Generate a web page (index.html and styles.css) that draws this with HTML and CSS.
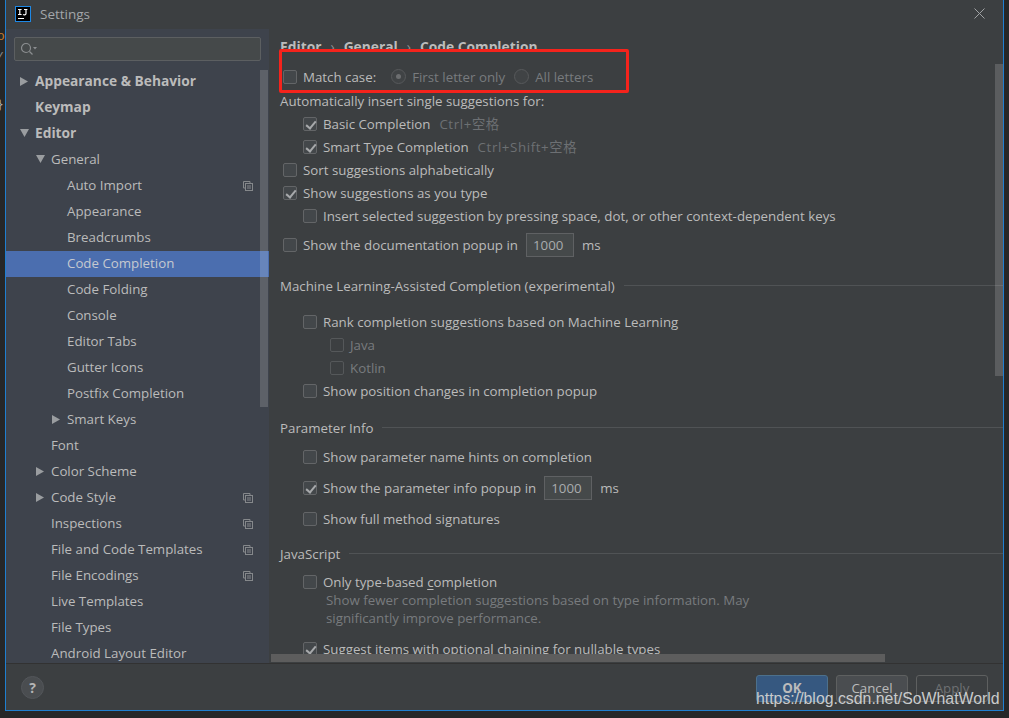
FILE: index.html
```html
<!DOCTYPE html>
<html lang="en">
<head>
<meta charset="utf-8">
<title>Settings</title>
<link rel="stylesheet" href="styles.css">
</head>
<body>
<span class="frag frag-o">o</span>
<span class="frag frag-s">/</span>
<span class="frag frag-b">}</span>
<div class="dialog">
  <header class="titlebar">
    <svg class="logo" width="16" height="16" viewBox="0 0 16 16"><rect x=".5" y=".5" width="15" height="15" fill="#000" stroke="#1e88e5"/><path d="M3 3.5h3.6M4.800 3.500v5M3 8.500h3.600M8 8.500c1 .6 3 .6 3-1V3.500M9 3.500h3.400M3 12.500h6" stroke="#fff" stroke-width="1.200" fill="none"/></svg>
    <span class="title">Settings</span>
    <svg class="close" width="11" height="11" viewBox="0 0 11 11"><path d="M.5.500l10 10M10.500.500l-10 10" stroke="#a0a2a4" stroke-width="1"/></svg>
  </header>
  <div class="middle">
    <aside class="sidebar">
      <div class="search">
        <svg width="18" height="14" viewBox="0 0 18 14"><circle cx="6" cy="6" r="4.500" fill="none" stroke="#8b8e90" stroke-width="1.200"/><path d="M9.500 9.500l3 3" stroke="#8b8e90" stroke-width="1.200"/><path d="M13 5h4l-2 2.500z" fill="#8b8e90"/></svg>
      </div>
      <div class="tree">
        <div class="node bold l0"><i class="tri right"></i>Appearance &amp; Behavior</div>
        <div class="node bold l0">Keymap</div>
        <div class="node bold l0"><i class="tri down"></i>Editor</div>
        <div class="node l1"><i class="tri down"></i>General</div>
        <div class="node l2">Auto Import<svg class="copy" viewBox="0 0 10 10"><use href="#copy"/></svg></div>
        <div class="node l2">Appearance</div>
        <div class="node l2">Breadcrumbs</div>
        <div class="node l2 selected">Code Completion</div>
        <div class="node l2">Code Folding</div>
        <div class="node l2">Console</div>
        <div class="node l2">Editor Tabs</div>
        <div class="node l2">Gutter Icons</div>
        <div class="node l2">Postfix Completion</div>
        <div class="node l2"><i class="tri right"></i>Smart Keys</div>
        <div class="node l1">Font</div>
        <div class="node l1"><i class="tri right"></i>Color Scheme</div>
        <div class="node l1"><i class="tri right"></i>Code Style<svg class="copy" viewBox="0 0 10 10"><use href="#copy"/></svg></div>
        <div class="node l1">Inspections<svg class="copy" viewBox="0 0 10 10"><use href="#copy"/></svg></div>
        <div class="node l1">File and Code Templates<svg class="copy" viewBox="0 0 10 10"><use href="#copy"/></svg></div>
        <div class="node l1">File Encodings<svg class="copy" viewBox="0 0 10 10"><use href="#copy"/></svg></div>
        <div class="node l1">Live Templates</div>
        <div class="node l1">File Types</div>
        <div class="node l1">Android Layout Editor</div>
      </div>
      <div class="vthumb side-thumb"></div>
    </aside>
    <main class="content">
      <div class="crumbs"><span>Editor</span><em>›</em><span>General</span><em>›</em><span>Code Completion</span></div>
      <div class="row match">
        <i class="cb"></i><span class="label">Match case:</span>
        <i class="radio on"></i><span class="label dim">First letter only</span>
        <i class="radio second"></i><span class="label dim">All letters</span>
      </div>
      <div class="row gap1">Automatically insert single suggestions for:</div>
      <div class="row in1"><i class="cb checked"></i>Basic Completion<span class="key">Ctrl+空格</span></div>
      <div class="row in1"><i class="cb checked"></i>Smart Type Completion<span class="key">Ctrl+Shift+空格</span></div>
      <div class="row"><i class="cb"></i>Sort suggestions alphabetically</div>
      <div class="row"><i class="cb checked"></i>Show suggestions as you type</div>
      <div class="row in1"><i class="cb"></i>Insert selected suggestion by pressing space, dot, or other context-dependent keys</div>
      <div class="row gap6"><i class="cb"></i>Show the documentation popup in<span class="num">1000</span><span class="ms">ms</span></div>
      <div class="section s-ml">Machine Learning-Assisted Completion (experimental)</div>
      <div class="row in1 gap-a"><i class="cb"></i>Rank completion suggestions based on Machine Learning</div>
      <div class="row in2 off"><i class="cb"></i>Java</div>
      <div class="row in2 off"><i class="cb"></i>Kotlin</div>
      <div class="row in1"><i class="cb"></i>Show position changes in completion popup</div>
      <div class="section s-pi">Parameter Info</div>
      <div class="row in1 gap-b"><i class="cb"></i>Show parameter name hints on completion</div>
      <div class="row in1 gap8"><i class="cb checked"></i>Show the parameter info popup in<span class="num">1000</span><span class="ms">ms</span></div>
      <div class="row in1 gap8"><i class="cb"></i>Show full method signatures</div>
      <div class="section s-js">JavaScript</div>
      <div class="row in1 gap-c"><i class="cb"></i><span>Only type-based <u>c</u>ompletion</span></div>
      <p class="hint">Show fewer completion suggestions based on type information. May<br>significantly improve performance.</p>
      <div class="row in1 gap-d"><i class="cb checked"></i><span>Suggest items with <u>o</u>ptional chaining for nullable types</span></div>
      <div class="vthumb main-thumb"></div>
      <div class="hthumb"></div>
      <div class="redbox"></div>
    </main>
  </div>
  <footer class="footer">
    <button class="help">?</button>
    <div class="actions">
      <button class="btn ok">OK</button>
      <button class="btn">Cancel</button>
      <button class="btn disabled">Apply</button>
    </div>
  </footer>
</div>
<div class="watermark">https://blog.csdn.net/SoWhatWorld</div>
<svg class="defs" width="0" height="0"><defs><g id="copy"><path d="M.5.500h6.500v2M.5.500v6.500h2" fill="none" stroke="#85888b"/><rect x="2.500" y="2.500" width="7" height="7" fill="none" stroke="#85888b"/><path d="M4 5h4M4 7h4" stroke="#85888b"/></g></defs></svg>
</body>
</html>
```
FILE: styles.css
```css
* { box-sizing: border-box; }
html, body { margin: 0; height: 100%; }
body {
  position: relative;
  width: 1009px;
  height: 718px;
  overflow: hidden;
  background: #262728;
  font-family: "Open Sans", "Noto Sans CJK SC", sans-serif;
  font-size: 13.300px;
  color: #bbbbbb;
}
.frag { position: absolute; left: 0; font-family: "Liberation Mono", monospace; font-size: 13px; }
.frag-o { top: 29px; left: -3px; color: #c47a2c; }
.frag-s { top: 50px; left: -4px; color: #888; }
.frag-b { top: 97px; left: -4px; color: #aaa; }
.dialog {
  margin-left: 5px;
  width: 999px;
  height: 711px;
  display: flex;
  flex-direction: column;
  background: #3c3f41;
  border: 1px solid #1f7fd0;
  border-top: 0;
}
.titlebar { height: 29px; flex: none; display: flex; align-items: center; padding: 0 18px 0 9px; }
.logo { margin-top: -2px; }
.title { margin-left: 9px; margin-top: -2px; font-size: 13.500px; color: #a3a6a9; }
.close { margin-left: auto; margin-top: -3px; }
.middle { flex: 1; min-height: 0; display: flex; }
.sidebar {
  position: relative;
  width: 263px;
  flex: none;
  background: #3e434c;
  padding-top: 8px;
  overflow: hidden;
}
.search {
  margin-left: 8px;
  width: 247px;
  height: 24px;
  background: #45494a;
  border: 1px solid #5c5f61;
  border-radius: 2px;
  padding: 4px 0 0 5px;
}
.search svg { display: block; }
.tree { margin-top: 8px; }
.node {
  position: relative;
  height: 26px;
  padding-bottom: 2px;
  display: flex;
  align-items: center;
}
.bold { font-weight: 700; font-size: 13.750px; padding-bottom: 4px; }
.l0 { padding-left: 29px; }
.l1 { padding-left: 45px; }
.l2 { padding-left: 61px; }
.selected { background: #4b6eaf; color: #c5c9cf; }
.tri { position: absolute; top: 8px; background: #9a9da0; }
.tri.right { width: 8px; height: 9px; clip-path: polygon(0 0, 100% 50%, 0 100%); }
.tri.down { width: 9px; height: 8px; clip-path: polygon(0 0, 100% 0, 50% 100%); }
.l0 .tri { left: 14px; }
.l1 .tri { left: 30px; }
.l2 .tri { left: 46px; }
.copy { position: absolute; left: 237px; top: 8px; width: 10px; height: 10px; }
.defs { position: absolute; }
.vthumb { position: absolute; width: 8px; background: rgba(255, 255, 255, .16); }
.side-thumb { left: 254px; top: 41px; height: 337px; }
.content {
  position: relative;
  flex: 1;
  min-width: 0;
  padding: 0 0 0 11px;
  overflow: hidden;
  background: #3c3f41;
}
.crumbs { height: 23px; padding-top: 8px; font-weight: 700; font-size: 13.800px; display: flex; gap: 9px; line-height: 20px; overflow: hidden; }
.crumbs em { font-style: normal; font-weight: 400; color: #8f9295; }
.row { height: 23px; display: flex; align-items: center; white-space: nowrap; }
.match { margin-top: 13px; padding-left: 3px; }
.row .cb { margin-right: 6px; }
.row { padding-left: 3px; }
.in1 { padding-left: 23px; }
.in2 { padding-left: 50px; color: #787b7e; }
.cb {
  position: relative;
  flex: none;
  width: 14px;
  height: 14px;
  background: #43474a;
  border: 1px solid #636567;
  border-radius: 2px;
}
.off .cb { background: #3c3f41; border-color: #55585a; }
.checked::after {
  content: "";
  position: absolute;
  left: 4px;
  top: 1px;
  width: 4px;
  height: 8px;
  border: solid #a7a9ab;
  border-width: 0 2px 2px 0;
  transform: rotate(40deg);
}
.radio {
  position: relative;
  flex: none;
  width: 15px;
  height: 15px;
  margin: 0 6px 0 15px;
  border-radius: 50%;
  background: #404345;
  border: 1px solid #57595b;
}
.radio.second { margin-left: 9px; }
.radio.on::after { content: ""; position: absolute; left: 4px; top: 4px; width: 5px; height: 5px; border-radius: 50%; background: #6c6e70; }
.dim { color: #787b7e; }
.gap1 { margin-top: 1px; padding-left: 0; }
.key { margin-left: 9px; color: #6d7073; letter-spacing: .6px; }
.gap6 { margin-top: 6px; }
.num {
  width: 48px;
  height: 24px;
  margin-left: 8px;
  padding-left: 6px;
  border: 1px solid #5f6163;
  background: #45494a;
  line-height: 22px;
  color: #a9acae;
}
.ms { margin-left: 8px; }
.section {
  display: flex;
  align-items: center;
  height: 23px;
  white-space: nowrap;
}
.section::after { content: ""; flex: 1; height: 1px; margin-left: 9px; background: #505355; }
.s-ml { margin-top: 18px; }
.gap-a { margin-top: 13px; }
.s-pi { margin-top: 14px; }
.gap-b { margin-top: 6px; }
.gap8 { margin-top: 8px; }
.s-js { margin-top: 12px; }
.gap-c { margin-top: 5px; }
.hint { margin: -2px 0 0 46px; line-height: 18px; color: #787b7e; }
.gap-d { margin-top: 10px; }
u { text-underline-offset: 2px; }
.main-thumb { right: 0; top: 35px; height: 312px; }
.hthumb { position: absolute; left: 2px; bottom: 1px; width: 614px; height: 8px; background: #5d5d5d; }
.redbox {
  position: absolute;
  left: 10px;
  top: 20px;
  width: 350px;
  height: 44px;
  border: 3px solid #f5231c;
  border-radius: 2px;
}
.footer {
  height: 47px;
  flex: none;
  border-top: 1px solid #323232;
  display: flex;
  align-items: flex-start;
  justify-content: space-between;
  padding: 11px 15px 0 15px;
}
.help {
  width: 23px;
  height: 23px;
  margin-top: 1px;
  padding: 0;
  border: 1px solid #53565a;
  border-radius: 50%;
  background: #4a4d50;
  color: #b5b5b5;
  font: 700 14px "Open Sans", sans-serif;
}
.actions { display: flex; gap: 8px; }
.btn {
  width: 72px;
  height: 27px;
  padding: 0 0 2px;
  border: 1px solid #5e6060;
  border-radius: 3px;
  background: #4a4d50;
  color: #bbb;
  font: 13.300px "Open Sans", sans-serif;
}
.ok { background: #365880; border-color: #4c708c; font-weight: 700; }
.disabled { background: #3c3f41; color: #6f7173; }
.watermark {
  position: absolute;
  left: 756px;
  top: 690px;
  font-family: "Liberation Sans", Arial, sans-serif;
  font-size: 15.850px;
  color: #c9cbcc;
  white-space: nowrap;
}
```
